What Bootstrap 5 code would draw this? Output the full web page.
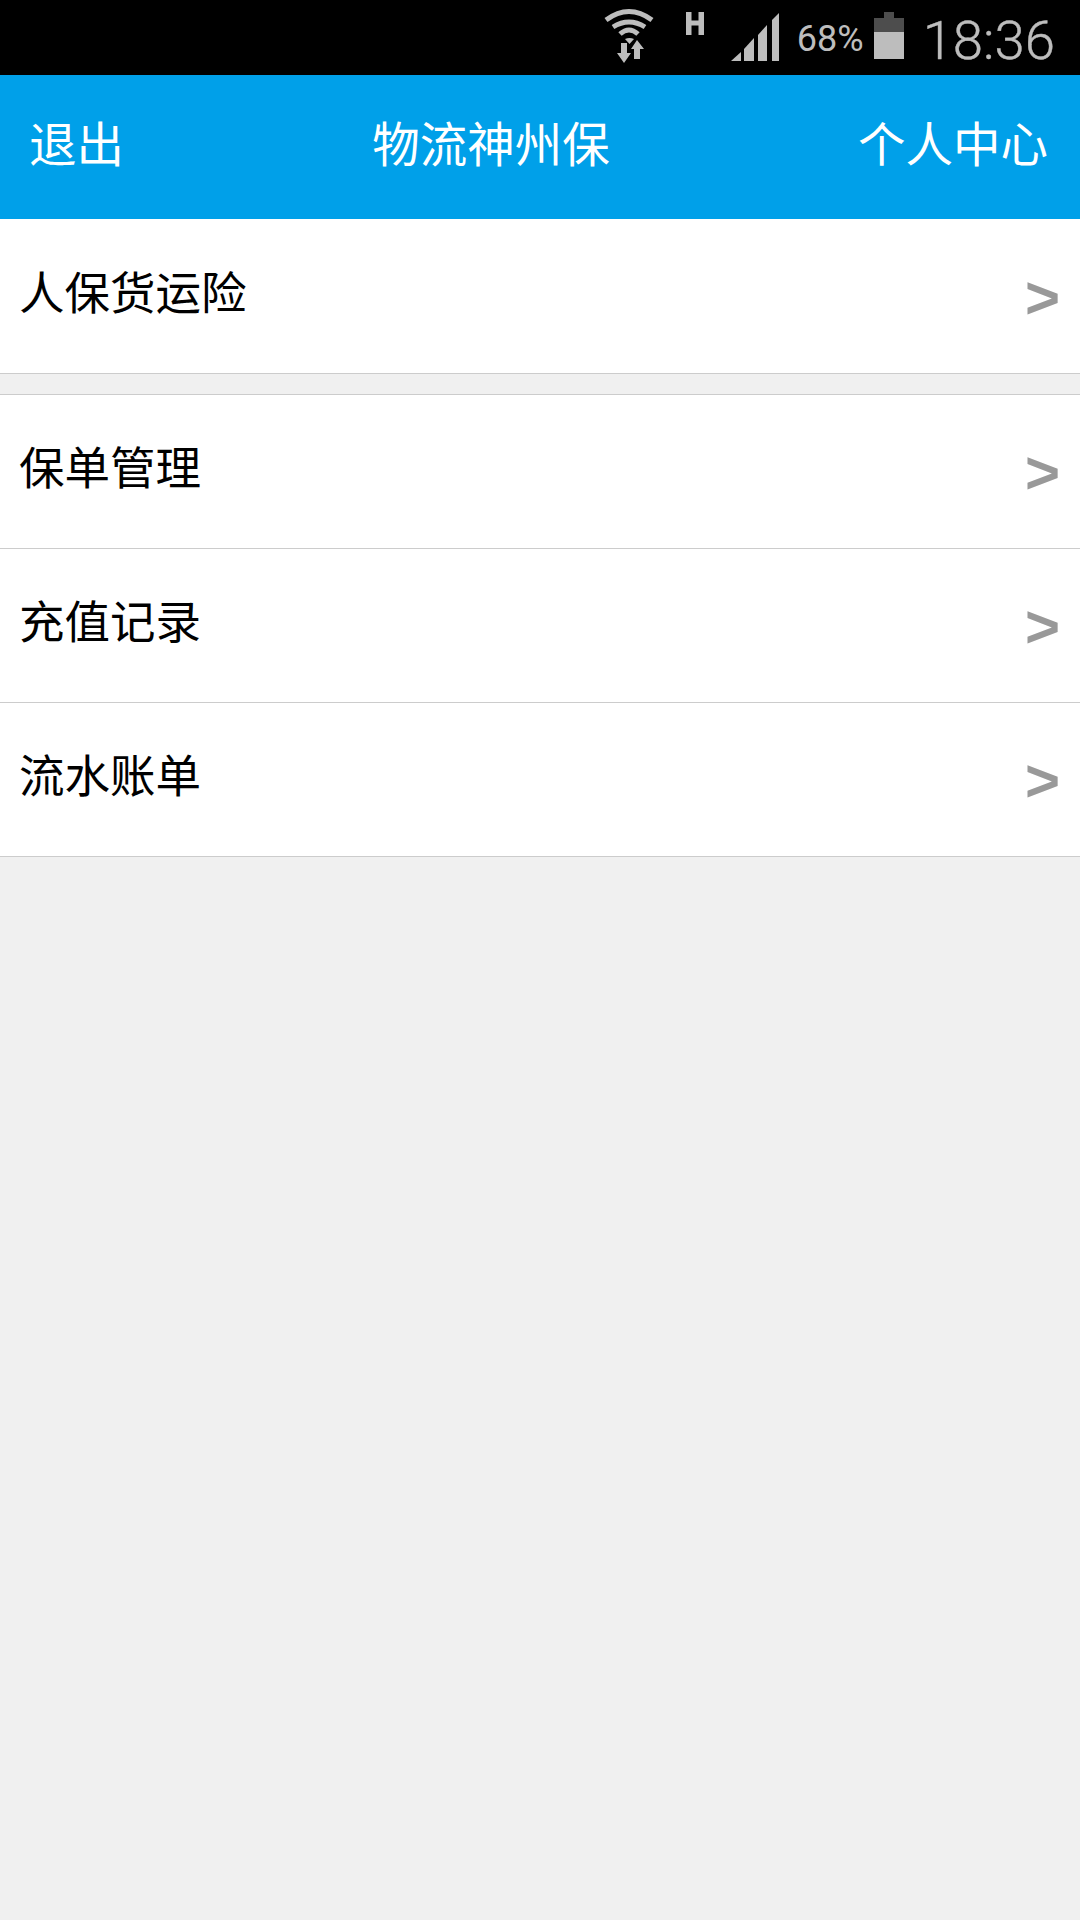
<!doctype html>
<html lang="zh">
  <head>
    <meta charset="utf-8">
    <meta name="viewport" content="width=device-width, initial-scale=1">
    <title>物流神州保</title>
    <link href="https://cdn.jsdelivr.net/npm/bootstrap@5.3.3/dist/css/bootstrap.min.css" rel="stylesheet">
    <style>
      html, body { height: 100%; margin: 0; }
      body {
        background: #f0f0f0;
        font-family: "Noto Sans CJK SC", "Liberation Sans", sans-serif;
      }
      .status-bar {
        height: 75px;
        background: #000;
        color: #bdbdbd;
      }
      .status-wifi { margin-top: 8px; margin-right: 31px; }
      .status-h { margin-top: 12px; margin-right: 27px; }
      .status-signal { margin-top: 13px; }
      .status-batt { margin-top: 12px; }
      .status-pct { font: 36px Roboto, sans-serif; margin: 0 10px 0 18px; padding-top: 2px; }
      .status-time { font: 300 54.5px Roboto, sans-serif; -webkit-text-stroke: .4px #bdbdbd; margin: 0 25px 0 19px; padding-top: 4px; }
      .app-bar {
        height: 144px;
        background: #00a0e9;
        color: #fff;
        font-size: 47.5px;
        padding: 0 32px 11px 29px;
      }
      .menu-group { background: #fff; margin-bottom: 20px; }
      .menu-row {
        height: 154px;
        padding: 0 20px 0 19px;
        border-bottom: 1px solid #ccc;
        background: #fff;
        color: #000;
        font-size: 45.5px;
      }
      .menu-row-first { height: 155px; }
      .menu-group-second { border-top: 1px solid #ccc; }
      .menu-label { margin-top: -11px; line-height: 1; }
      .menu-arrow {
        font: bold 60px "Liberation Sans", sans-serif;
        color: #999;
        margin-top: 2px;
      }
    </style>
  </head>
  <body>
    <div class="status-bar d-flex align-items-center justify-content-end">
      <svg width="52" height="56" viewBox="0 0 52 56" class="status-wifi align-self-start" fill="none" stroke="#bdbdbd" stroke-width="5">
        <path d="M3 12 Q26 -5 49 12"/>
        <path d="M10 19 Q26 9 42 19"/>
        <path d="M17 26 Q26 18 35 26"/>
        <path d="M22 31 Q26.500 29 31 31 L26.500 36 Z" fill="#bdbdbd" stroke="none"/>
        <path d="M18 35h6v10h4l-7 10-7-10h4z" fill="#bdbdbd" stroke="none"/>
        <path d="M34 32l7 9h-4v10h-6V41h-3z" fill="#bdbdbd" stroke="none"/>
      </svg>
      <svg width="18" height="23" viewBox="0 0 18 23" class="status-h align-self-start" fill="#bdbdbd">
        <path d="M0 0h5.500v8.500h7V0H18v23h-5.500V13.500h-7V23H0z"/>
      </svg>
      <svg width="48" height="48" viewBox="0 0 48 48" fill="#bdbdbd" class="status-signal align-self-start">
        <path d="M0 48 10 39V48z"/>
        <path d="M13 36 23 25V48H13z"/>
        <path d="M27 22 36 12V48H27z"/>
        <path d="M41 7 48 0V48H41z"/>
      </svg>
      <span class="status-pct">68%</span>
      <svg width="30" height="47" viewBox="0 0 30 47" class="status-batt align-self-start">
        <path d="M10 0h10v6h10v14H0V6h10z" fill="#4d4d4d"/>
        <path d="M0 20h30v27H0z" fill="#bdbdbd"/>
      </svg>
      <span class="status-time">18:36</span>
    </div>

    <header class="app-bar d-flex align-items-center justify-content-between">
      <span>退出</span>
      <span>物流神州保</span>
      <span>个人中心</span>
    </header>

    <div class="menu-group">
      <div class="menu-row menu-row-first d-flex align-items-center justify-content-between">
        <span class="menu-label">人保货运险</span>
        <span class="menu-arrow">&gt;</span>
      </div>
    </div>

    <div class="menu-group menu-group-second">
      <div class="menu-row d-flex align-items-center justify-content-between">
        <span class="menu-label">保单管理</span>
        <span class="menu-arrow">&gt;</span>
      </div>
      <div class="menu-row d-flex align-items-center justify-content-between">
        <span class="menu-label">充值记录</span>
        <span class="menu-arrow">&gt;</span>
      </div>
      <div class="menu-row d-flex align-items-center justify-content-between">
        <span class="menu-label">流水账单</span>
        <span class="menu-arrow">&gt;</span>
      </div>
    </div>
    <script src="https://cdn.jsdelivr.net/npm/bootstrap@5.3.3/dist/js/bootstrap.bundle.min.js"></script>
  </body>
</html>
